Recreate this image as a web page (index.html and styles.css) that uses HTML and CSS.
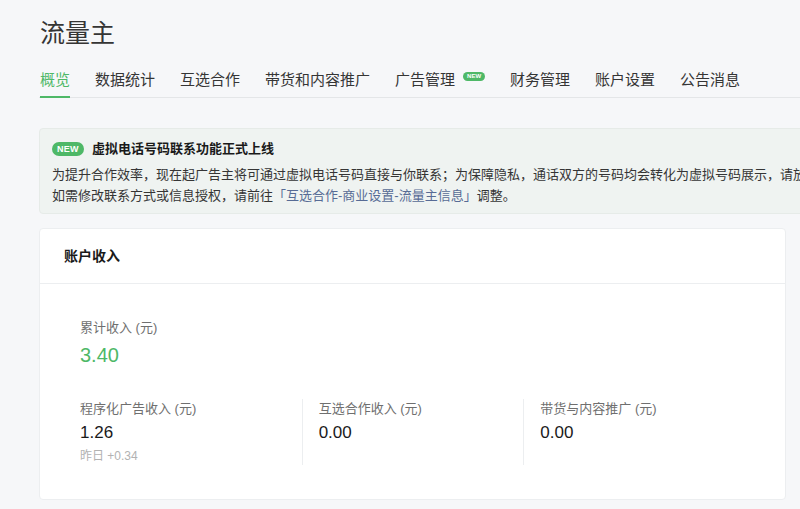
FILE: index.html
```html
<!DOCTYPE html>
<html lang="zh-CN">
<head>
    <meta charset="UTF-8">
    <meta name="viewport" content="width=device-width, initial-scale=1.0">
    <title>流量主</title>
    <link rel="stylesheet" href="styles.css">
</head>
<body>
    <div class="page">
        <h1 class="title">流量主</h1>

        <ul class="tabs">
            <li class="tab active">概览</li>
            <li class="tab">数据统计</li>
            <li class="tab">互选合作</li>
            <li class="tab">带货和内容推广</li>
            <li class="tab">广告管理<span class="tab-new">NEW</span></li>
            <li class="tab">财务管理</li>
            <li class="tab">账户设置</li>
            <li class="tab">公告消息</li>
        </ul>

        <div class="notice">
            <div class="notice-title"><span class="badge">NEW</span>虚拟电话号码联系功能正式上线</div>
            <p>为提升合作效率，现在起广告主将可通过虚拟电话号码直接与你联系；为保障隐私，通话双方的号码均会转化为虚拟号码展示，请放心使用。</p>
            <p>如需修改联系方式或信息授权，请前往<a href="#">「互选合作-商业设置-流量主信息」</a>调整。</p>
        </div>

        <div class="card">
            <div class="card-head">账户收入</div>
            <div class="card-body">
                <div class="label">累计收入 (元)</div>
                <div class="total">3.40</div>

                <div class="stats">
                    <div class="stat">
                        <div class="label">程序化广告收入 (元)</div>
                        <div class="value">1.26</div>
                        <div class="sub">昨日 +0.34</div>
                    </div>
                    <div class="stat">
                        <div class="label">互选合作收入 (元)</div>
                        <div class="value">0.00</div>
                    </div>
                    <div class="stat">
                        <div class="label">带货与内容推广 (元)</div>
                        <div class="value">0.00</div>
                    </div>
                </div>
            </div>
        </div>
    </div>
</body>
</html>
```

FILE: styles.css
```css
body {
    margin: 0;
    background-color: #f6f7f9;
    color: #333;
    font-family: 'Liberation Sans', 'Noto Sans CJK SC', sans-serif;
    overflow: hidden;
}
.page {
    padding: 15px 14px 0 39px;
}
.title {
    margin: 0 0 0 1px;
    font-size: 25px;
    line-height: 36px;
    font-weight: normal;
    color: #353535;
}
.tabs {
    list-style: none;
    margin: 18px 0 0 0;
    padding: 0 0 0 1px;
    display: flex;
    gap: 25px;
    border-bottom: 1px solid #e4e6e8;
    margin-right: -14px;
}
.tab {
    font-size: 15px;
    line-height: 22px;
    padding-bottom: 5px;
    color: #353535;
    display: flex;
    align-items: center;
    margin-bottom: -1px;
    border-bottom: 2px solid transparent;
}
.tab.active {
    color: #4eb867;
    border-bottom-color: #4eb867;
}
.tab-new {
    margin-left: 8px;
    margin-top: -8px;
    background-color: #4eb867;
    color: #fff;
    font-size: 6px;
    font-weight: bold;
    line-height: 9px;
    padding: 0 4px;
    border-radius: 5px;
}
.notice {
    margin-top: 30px;
    width: max-content;
    background-color: #eff3f1;
    border: 1px solid #e6ebe8;
    border-radius: 4px;
    padding: 10px 16px 7px 12px;
    font-size: 13px;
    color: #353535;
}
.notice-title {
    display: flex;
    align-items: center;
    line-height: 20px;
    font-weight: bold;
    color: #1a1a1a;
    margin-bottom: 5px;
}
.badge {
    background-color: #4eb867;
    color: #fff;
    font-size: 9px;
    font-weight: bold;
    line-height: 14px;
    padding: 0 5px;
    border-radius: 7px;
    margin-right: 8px;
    letter-spacing: 0.3px;
}
.notice p {
    margin: 0;
    line-height: 21px;
}
.notice a {
    color: #576b95;
    text-decoration: none;
}
.card {
    margin-top: 14px;
    background-color: #fff;
    border: 1px solid #eceef0;
    border-radius: 4px;
}
.card-head {
    padding: 0 24px;
    line-height: 54px;
    font-size: 14px;
    font-weight: bold;
    color: #1a1a1a;
    border-bottom: 1px solid #eceef0;
}
.card-body {
    padding: 35px 40px 34px 40px;
}
.label {
    font-size: 13px;
    line-height: 18px;
    color: #6f6f6f;
}
.total {
    margin-top: 4px;
    font-size: 20px;
    line-height: 28px;
    color: #4eb867;
}
.stats {
    margin-top: 30px;
    display: grid;
    grid-template-columns: 1fr 1fr 1fr;
}
.stat {
    min-height: 65px;
}
.stat + .stat {
    border-left: 1px solid #eceef0;
    padding-left: 16px;
}
.stat .label {
    line-height: 20px;
}
.value {
    margin-top: 2px;
    font-size: 17px;
    line-height: 24px;
    color: #1a1a1a;
}
.sub {
    margin-top: 2px;
    font-size: 12px;
    line-height: 18px;
    color: #b2b2b2;
}
```
